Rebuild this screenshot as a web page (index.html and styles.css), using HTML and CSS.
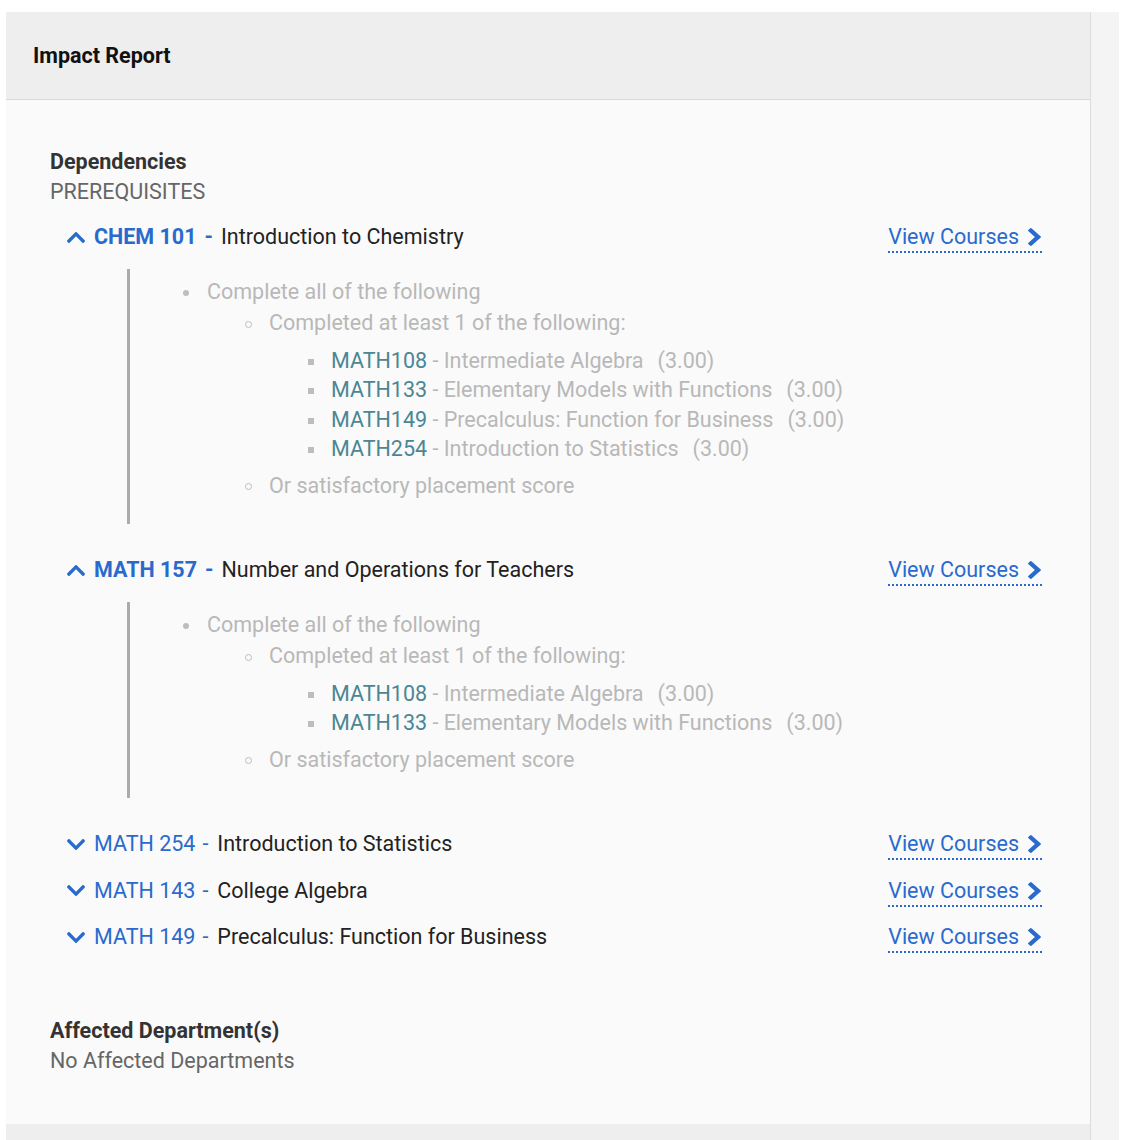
FILE: index.html
```html
<!DOCTYPE html>
<html>
<head>
<meta charset="utf-8">
<link rel="stylesheet" href="styles.css">
</head>
<body>
<div class="page">
  <div class="panel">
    <div class="header"><h1 class="title">Impact Report</h1></div>
    <div class="content">
      <h2 class="section-title">Dependencies</h2>
      <div class="section-sub">PREREQUISITES</div>

      <div class="row expanded">
        <svg class="chev" viewBox="5 123 438 266" preserveAspectRatio="none"><path d="M240.971 130.524l194.343 194.343c9.373 9.373 9.373 24.569 0 33.941l-22.667 22.667c-9.357 9.357-24.522 9.375-33.901.04L224 227.495 69.255 381.516c-9.379 9.335-24.544 9.317-33.901-.04l-22.667-22.667c-9.373-9.373-9.373-24.569 0-33.941L207.03 130.525c9.372-9.373 24.568-9.373 33.941-.001z"/></svg>
        <span class="code">CHEM 101</span><span class="sep">-</span><span class="name">Introduction to Chemistry</span>
        <a class="view" href="#">View Courses<svg class="chev-r" viewBox="346 26 1036 1612" preserveAspectRatio="none"><path d="M1363 877l-742 742q-19 19-45 19t-45-19l-166-166q-19-19-19-45t19-45l531-531-531-531q-19-19-19-45t19-45l166-166q19-19 45-19t45 19l742 742q19 19 19 45t-19 45z"/></svg></a>
      </div>
      <div class="req">
        <ul class="l1">
          <li>Complete all of the following
            <ul class="l2">
              <li>Completed at least 1 of the following:
                <ul class="l3">
                  <li><span class="course">MATH108</span> - Intermediate Algebra<span class="cr">(3.00)</span></li>
                  <li><span class="course">MATH133</span> - Elementary Models with Functions<span class="cr">(3.00)</span></li>
                  <li><span class="course">MATH149</span> - Precalculus: Function for Business<span class="cr">(3.00)</span></li>
                  <li><span class="course">MATH254</span> - Introduction to Statistics<span class="cr">(3.00)</span></li>
                </ul>
              </li>
              <li>Or satisfactory placement score</li>
            </ul>
          </li>
        </ul>
      </div>

      <div class="row expanded">
        <svg class="chev" viewBox="5 123 438 266" preserveAspectRatio="none"><path d="M240.971 130.524l194.343 194.343c9.373 9.373 9.373 24.569 0 33.941l-22.667 22.667c-9.357 9.357-24.522 9.375-33.901.04L224 227.495 69.255 381.516c-9.379 9.335-24.544 9.317-33.901-.04l-22.667-22.667c-9.373-9.373-9.373-24.569 0-33.941L207.03 130.525c9.372-9.373 24.568-9.373 33.941-.001z"/></svg>
        <span class="code">MATH 157</span><span class="sep">-</span><span class="name">Number and Operations for Teachers</span>
        <a class="view" href="#">View Courses<svg class="chev-r" viewBox="346 26 1036 1612" preserveAspectRatio="none"><path d="M1363 877l-742 742q-19 19-45 19t-45-19l-166-166q-19-19-19-45t19-45l531-531-531-531q-19-19-19-45t19-45l166-166q19-19 45-19t45 19l742 742q19 19 19 45t-19 45z"/></svg></a>
      </div>
      <div class="req">
        <ul class="l1">
          <li>Complete all of the following
            <ul class="l2">
              <li>Completed at least 1 of the following:
                <ul class="l3">
                  <li><span class="course">MATH108</span> - Intermediate Algebra<span class="cr">(3.00)</span></li>
                  <li><span class="course">MATH133</span> - Elementary Models with Functions<span class="cr">(3.00)</span></li>
                </ul>
              </li>
              <li>Or satisfactory placement score</li>
            </ul>
          </li>
        </ul>
      </div>

      <div class="row">
        <svg class="chev" viewBox="5 123 438 266" preserveAspectRatio="none"><path d="M207.029 381.476L12.686 187.132c-9.373-9.373-9.373-24.569 0-33.941l22.667-22.667c9.357-9.357 24.522-9.375 33.901-.04L224 284.505l154.745-154.021c9.379-9.335 24.544-9.317 33.901.04l22.667 22.667c9.373 9.373 9.373 24.569 0 33.941L240.971 381.476c-9.373 9.372-24.569 9.372-33.942 0z"/></svg>
        <span class="code">MATH 254</span><span class="sep">-</span><span class="name">Introduction to Statistics</span>
        <a class="view" href="#">View Courses<svg class="chev-r" viewBox="346 26 1036 1612" preserveAspectRatio="none"><path d="M1363 877l-742 742q-19 19-45 19t-45-19l-166-166q-19-19-19-45t19-45l531-531-531-531q-19-19-19-45t19-45l166-166q19-19 45-19t45 19l742 742q19 19 19 45t-19 45z"/></svg></a>
      </div>
      <div class="row">
        <svg class="chev" viewBox="5 123 438 266" preserveAspectRatio="none"><path d="M207.029 381.476L12.686 187.132c-9.373-9.373-9.373-24.569 0-33.941l22.667-22.667c9.357-9.357 24.522-9.375 33.901-.04L224 284.505l154.745-154.021c9.379-9.335 24.544-9.317 33.901.04l22.667 22.667c9.373 9.373 9.373 24.569 0 33.941L240.971 381.476c-9.373 9.372-24.569 9.372-33.942 0z"/></svg>
        <span class="code">MATH 143</span><span class="sep">-</span><span class="name">College Algebra</span>
        <a class="view" href="#">View Courses<svg class="chev-r" viewBox="346 26 1036 1612" preserveAspectRatio="none"><path d="M1363 877l-742 742q-19 19-45 19t-45-19l-166-166q-19-19-19-45t19-45l531-531-531-531q-19-19-19-45t19-45l166-166q19-19 45-19t45 19l742 742q19 19 19 45t-19 45z"/></svg></a>
      </div>
      <div class="row">
        <svg class="chev" viewBox="5 123 438 266" preserveAspectRatio="none"><path d="M207.029 381.476L12.686 187.132c-9.373-9.373-9.373-24.569 0-33.941l22.667-22.667c9.357-9.357 24.522-9.375 33.901-.04L224 284.505l154.745-154.021c9.379-9.335 24.544-9.317 33.901.04l22.667 22.667c9.373 9.373 9.373 24.569 0 33.941L240.971 381.476c-9.373 9.372-24.569 9.372-33.942 0z"/></svg>
        <span class="code">MATH 149</span><span class="sep">-</span><span class="name">Precalculus: Function for Business</span>
        <a class="view" href="#">View Courses<svg class="chev-r" viewBox="346 26 1036 1612" preserveAspectRatio="none"><path d="M1363 877l-742 742q-19 19-45 19t-45-19l-166-166q-19-19-19-45t19-45l531-531-531-531q-19-19-19-45t19-45l166-166q19-19 45-19t45 19l742 742q19 19 19 45t-19 45z"/></svg></a>
      </div>

      <h2 class="section-title affected">Affected Department(s)</h2>
      <div class="section-sub">No Affected Departments</div>
    </div>
    <div class="footer"></div>
  </div>
  <div class="side"></div>
</div>
</body>
</html>
```
FILE: styles.css
```css
html, body {
  margin: 0;
  padding: 0;
  background: #ffffff;
}
body {
  font-family: Roboto, "Noto Sans", "Liberation Sans", sans-serif;
  font-size: 21.5px;
  color: #222;
}
.page {
  display: flex;
  margin: 12px 0 0 6px;
  width: 1113px;
}
.panel {
  width: 1084px;
  background: #fafafa;
}
.side {
  width: 28px;
  background: #f4f4f4;
  border-left: 1px solid #dcdcdc;
}
.header {
  height: 87px;
  background: #eeeeee;
  border-bottom: 1px solid #d9d9d9;
  display: flex;
  align-items: center;
  padding-left: 27px;
}
.title {
  margin: 0;
  font-size: 21.5px;
  font-weight: 700;
  color: #111;
}
.content {
  padding: 47px 48px 48px 44px;
}
.section-title {
  margin: 0;
  font-size: 21.5px;
  line-height: 30px;
  font-weight: 700;
  color: #333;
}
.section-sub {
  font-size: 21.5px;
  line-height: 30px;
  color: #666;
}
.affected {
  margin-top: 55px;
}
.row {
  display: flex;
  align-items: center;
  height: 46.5px;
  padding-left: 16px;
  line-height: 30px;
}
.section-sub + .row {
  margin-top: 7px;
}
.chev {
  width: 18px;
  height: 11px;
  fill: #2a6acd;
  margin-left: 1px;
  margin-right: 9px;
}
.code {
  color: #2a6acd;
}
.sep {
  color: #2a6acd;
  margin: 0 9px 0 7px;
}
.expanded .code,
.expanded .sep {
  font-weight: 700;
}
.expanded .sep {
  margin: 0 8px 0 8px;
}
.name {
  color: #222;
}
.view {
  margin-left: auto;
  color: #2a6acd;
  text-decoration: none;
  display: flex;
  align-items: center;
  border-bottom: 2px dotted #2a6acd;
  line-height: 28px;
  margin-top: 2px;
}
.chev-r {
  width: 13px;
  height: 18px;
  fill: #2a6acd;
  margin-left: 9px;
  margin-right: 1px;
}
.req {
  margin: 8px 0 23px 77px;
  border-left: 3px solid #ababab;
  padding: 8px 0 24px 0;
  color: #b8b8b8;
}
.req ul {
  margin: 0;
  line-height: 29.5px;
  list-style: none;
}
.l1 {
  padding-left: 77px;
}
.l2 {
  padding-left: 62px;
  margin-top: 2px !important;
}
.l3 {
  padding-left: 62px;
  margin: 8px 0 7px 0 !important;
}
.l1 > li::before,
.l2 > li::before,
.l3 > li::before {
  content: "";
  display: inline-block;
  vertical-align: middle;
  box-sizing: border-box;
}
.l1 > li::before {
  width: 6px;
  height: 6px;
  border-radius: 50%;
  background: #bdbdbd;
  margin: 0 18px 0 -24px;
}
.l2 > li::before {
  width: 7px;
  height: 7px;
  border-radius: 50%;
  border: 1.5px solid #bdbdbd;
  margin: 0 17px 0 -24px;
}
.l3 > li::before {
  width: 6px;
  height: 6px;
  background: #bdbdbd;
  margin: 0 17px 0 -23px;
}
.course {
  color: #4a8694;
}
.cr {
  margin-left: 14px;
}
.footer {
  height: 16px;
  background: #eeeeee;
}
```
